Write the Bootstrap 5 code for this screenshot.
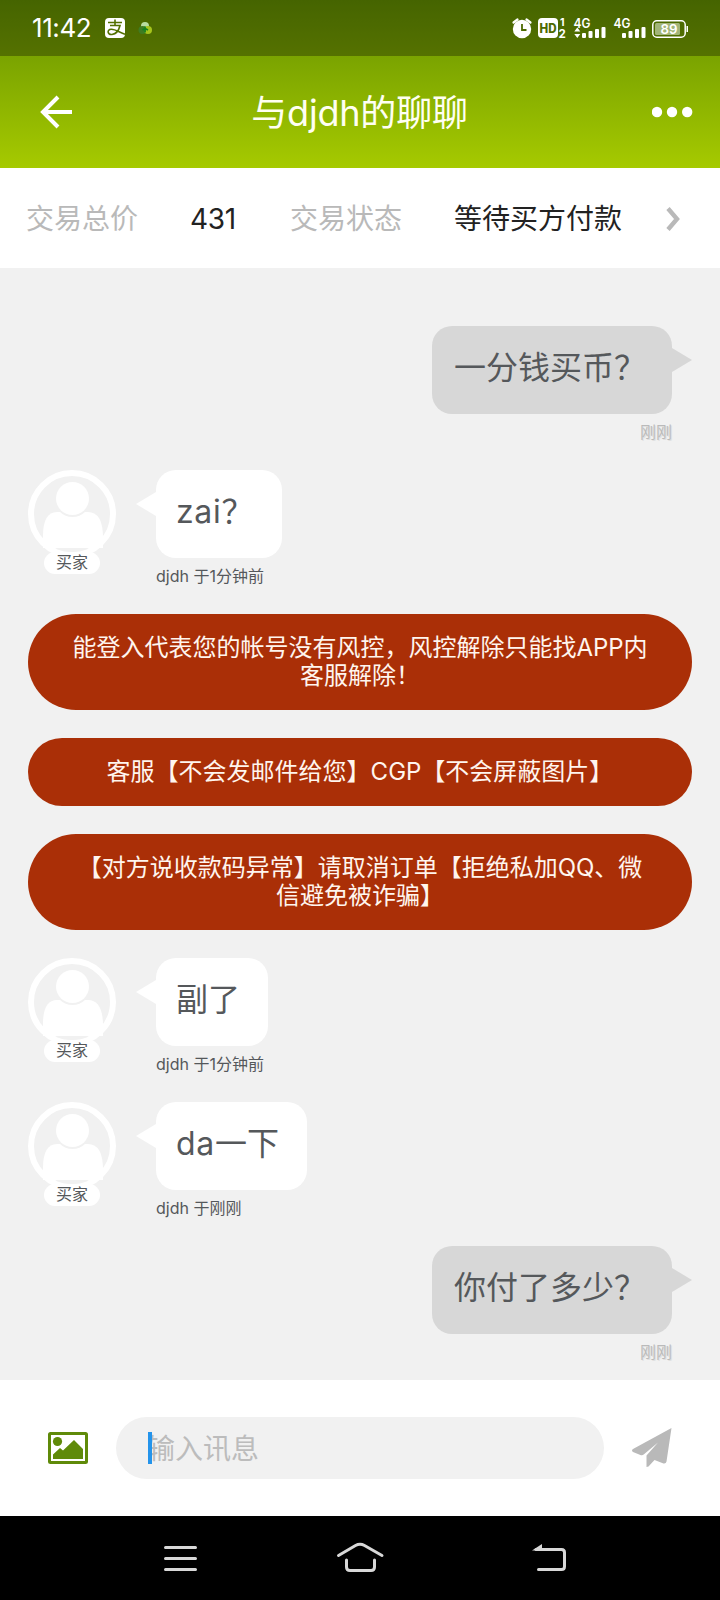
<!DOCTYPE html>
<html lang="zh-CN">
<head>
<meta charset="utf-8">
<meta name="viewport" content="width=device-width, initial-scale=1">
<title>与djdh的聊聊</title>
<link href="https://cdn.jsdelivr.net/npm/bootstrap@5.3.0/dist/css/bootstrap.min.css" rel="stylesheet">
<style>
  body { font-family: Inter, "Noto Sans CJK SC", sans-serif; background: #f1f1f1; color: #55585b; width: 720px; min-height: 1600px; }
  svg { display: block; flex: none; }
  svg text { font-family: Inter, "Noto Sans CJK SC", sans-serif; }
  .app-top { height: 168px; background: linear-gradient(#649000, #a6ca00); }
  .status-strip { height: 56px; background: rgba(0,0,0,.3); padding-left: 32px; }
  .clock { font-size: 26px; line-height: 56px; width: 73px; letter-spacing: -.4px; }
  .title-bar { height: 112px; padding: 0 27px 0 40px; }
  .chat-title { font-size: 36px; font-weight: 380; line-height: 112px; color: #fffff2; letter-spacing: -.2px; padding: 2px 6px 0 0; }
  .deal-row { height: 100px; font-size: 28px; line-height: 100px; padding: 2px 40px 0 26px; color: #222; font-weight: 380; }
  .deal-label { color: #b9b9b9; width: 164px; }
  .deal-sum { width: 100px; letter-spacing: -.3px; }
  .chat-log { height: 1112px; padding: 58px 28px 0; gap: 28px; }
  .msg { height: 116px; }
  .bubble { position: relative; height: 88px; flex: none; border-radius: 20px; background: #fff; padding: 0 28px 0 20px; font-size: 32px; font-weight: 380; line-height: 84px; white-space: nowrap; }
  .bubble::before { content: ""; position: absolute; top: 22px; left: -20px; border: 12px solid transparent; border-width: 12px 20px 12px 0; border-right-color: #fff; }
  .bubble-mine { background: #d7d7d7; margin-right: 20px; padding: 0 26px 0 22px; }
  .bubble-mine::before { left: auto; right: -20px; border-width: 12px 0 12px 20px; border-color: transparent transparent transparent #d7d7d7; }
  .wide-latin { letter-spacing: .7px; }
  .stamp { font-size: 16px; line-height: 24px; margin-top: 6px; white-space: nowrap; font-weight: 380; }
  .stamp-mine { color: #bababa; margin-right: 20px; text-shadow: 1px 1px 0 #e0e0e0; }
  .who { width: 88px; margin-right: 40px; }
  .role { width: 56px; height: 22px; line-height: 21px; font-size: 16px; font-weight: 380; background: #fff; border-radius: 11px; margin-top: -6px; position: relative; }
  .notice { background: #aa2f07; color: #fff5ee; border-radius: 48px; padding: 20px 0; font-size: 24px; line-height: 28px; }
  .composer { height: 136px; padding-left: 48px; padding-right: 47px; }
  .entry { width: 488px; height: 62px; flex: none; border-radius: 31px; background: #f1f1f1; margin: 0 28px; padding-left: 31px; font-size: 28px; font-weight: 380; color: #bcbcbc; line-height: 64px; position: relative; }
  .caret { position: absolute; left: 32px; top: 15px; width: 4px; height: 32px; background: #2494eb; }
  .sys-nav { height: 84px; background: #000; }
</style>
</head>
<body>
<header class="app-top text-white">
  <div class="status-strip d-flex align-items-center">
    <span class="clock">11:42</span>
    <svg width="48" height="56" viewBox="0 0 48 56">
      <rect y="18" width="20" height="20" rx="4" fill="#fff"/>
      <path d="M3 22.500h14M10 19.500v6M5 25.500h10c-1.200 5-4 8.500-8 9-4.500.4-5.500-5-.8-5.200 4-.2 8 3 13.800 5" fill="none" stroke="#527000" stroke-width="1.600"/>
      <circle cx="40" cy="26" r="4" fill="#b8dca0"/><circle cx="37.500" cy="30" r="4" fill="#3f7c22"/><circle cx="43" cy="30" r="4" fill="#a6c41c"/>
      <path d="M40 26.500v6M37.500 30l2.500-1.500 3 1.500" stroke="#168020" stroke-width="1.800" fill="none"/>
    </svg>
    <svg class="ms-auto" width="209" height="56" viewBox="511 0 209 56">
      <g fill="#fff">
        <circle cx="522" cy="29" r="9.200"/>
        <path d="M513.500 22.500l4-3M530.500 22.500l-4-3" stroke="#fff" stroke-width="2.200" stroke-linecap="round"/>
        <path d="M522 24v6h4.500" stroke="#4d6a00" stroke-width="1.800" fill="none"/>
        <rect x="538" y="18" width="20" height="20" rx="4"/>
        <text x="539.500" y="32.800" font-size="12.500" font-weight="800" fill="#4d6a00" textLength="17" lengthAdjust="spacingAndGlyphs">HD</text>
        <text x="560" y="26" font-size="10.500" font-weight="700">1</text>
        <text x="558.500" y="37.500" font-size="11.500" font-weight="700">2</text>
        <text x="573.500" y="27.500" font-size="13" font-weight="600" textLength="17" lengthAdjust="spacingAndGlyphs">4G</text>
        <path d="M577.300 27.500l3 4h-6zM577.300 38l-3-4h6z"/>
        <rect x="582" y="33" width="4" height="5" rx="1"/><rect x="588.500" y="31" width="4" height="7" rx="1"/><rect x="595" y="29" width="4" height="9" rx="1"/><rect x="601.500" y="27" width="4" height="11" rx="1"/>
        <text x="613.500" y="27.500" font-size="13" font-weight="600" textLength="17" lengthAdjust="spacingAndGlyphs">4G</text>
        <rect x="622" y="33" width="4" height="5" rx="1"/><rect x="628.500" y="31" width="4" height="7" rx="1"/><rect x="635" y="29" width="4" height="9" rx="1"/><rect x="641.500" y="27" width="4" height="11" rx="1"/>
        <rect x="652.800" y="20.800" width="32.400" height="16.400" rx="4" fill="none" stroke="#fff" stroke-width="1.500"/>
        <rect x="655" y="23" width="25" height="12" rx="1.500" fill="#a2b578"/>
        <rect x="686.500" y="26" width="1.500" height="6"/>
        <text x="660.500" y="34" font-size="13.500" font-weight="600" textLength="17" lengthAdjust="spacingAndGlyphs">89</text>
      </g>
    </svg>
  </div>
  <nav class="title-bar d-flex align-items-center justify-content-between">
    <svg width="33" height="34" viewBox="0 0 33 34"><path d="M32 17H3M18 2L3 17l15 15" fill="none" stroke="#fff" stroke-width="4"/></svg>
    <span class="chat-title">与djdh的聊聊</span>
    <svg width="41" height="12" viewBox="0 0 41 12" fill="#fff"><circle cx="5" cy="6" r="5.200"/><circle cx="20" cy="6" r="5.200"/><circle cx="35.200" cy="6" r="5.200"/></svg>
  </nav>
</header>

<section class="deal-row d-flex align-items-center bg-white">
  <span class="deal-label">交易总价</span>
  <span class="deal-sum">431</span>
  <span class="deal-label">交易状态</span>
  <span>等待买方付款</span>
  <svg class="ms-auto" width="14" height="24" viewBox="0 0 14 24"><path d="M2 1.500L11 12 2 22.500" fill="none" stroke="#b9b9b9" stroke-width="4.400"/></svg>
</section>

<main class="chat-log d-flex flex-column">
  <article class="msg d-flex flex-column align-items-end">
    <div class="bubble bubble-mine">一分钱买币&#65311;</div>
    <div class="stamp stamp-mine">刚刚</div>
  </article>

  <article class="msg d-flex">
    <div class="who d-flex flex-column align-items-center">
      <svg width="88" height="88" viewBox="0 0 88 88"><use href="#person"/></svg>
      <span class="role text-center">买家</span>
    </div>
    <div class="d-flex flex-column align-items-start">
      <div class="bubble"><span class="wide-latin">zai</span>&#65311;</div>
      <div class="stamp">djdh 于1分钟前</div>
    </div>
  </article>

  <div class="notice text-center">能登入代表您的帐号没有风控&#65292;风控解除只能找APP内<br>客服解除&#65281;</div>
  <div class="notice text-center">客服【不会发邮件给您】CGP【不会屏蔽图片】</div>
  <div class="notice text-center">【对方说收款码异常】请取消订单【拒绝私加QQ、微<br>信避免被诈骗】</div>

  <article class="msg d-flex">
    <div class="who d-flex flex-column align-items-center">
      <svg width="88" height="88" viewBox="0 0 88 88"><use href="#person"/></svg>
      <span class="role text-center">买家</span>
    </div>
    <div class="d-flex flex-column align-items-start">
      <div class="bubble">副了</div>
      <div class="stamp">djdh 于1分钟前</div>
    </div>
  </article>

  <article class="msg d-flex">
    <div class="who d-flex flex-column align-items-center">
      <svg width="88" height="88" viewBox="0 0 88 88"><use href="#person"/></svg>
      <span class="role text-center">买家</span>
    </div>
    <div class="d-flex flex-column align-items-start">
      <div class="bubble"><span class="wide-latin">da</span>一下</div>
      <div class="stamp">djdh 于刚刚</div>
    </div>
  </article>

  <article class="msg d-flex flex-column align-items-end">
    <div class="bubble bubble-mine">你付了多少&#65311;</div>
    <div class="stamp stamp-mine">刚刚</div>
  </article>
</main>

<section class="composer d-flex align-items-center bg-white">
  <svg width="40" height="32" viewBox="0 0 40 32"><rect x="1.500" y="1.500" width="37" height="29" rx="1" fill="none" stroke="#5f8a09" stroke-width="3"/><circle cx="9.500" cy="9.500" r="4.600" fill="#5f8a09"/><path d="M5 27v-4.500L12 16l3 2.500L26 8l9 9v10z" fill="#5f8a09"/></svg>
  <div class="entry">输入讯息<span class="caret"></span></div>
  <svg width="41" height="42" viewBox="0 0 41 42"><path d="M39.500 1L1 22q-2 1.500 0 3l8 3.200q1.500.5 3-1L26 15.500 14.500 28.500V40l2-.5 6-6.500 9 3.500q2.500.5 3-2L39.500 1z" fill="#b9b9b9"/></svg>
</section>

<footer class="sys-nav">
  <svg width="720" height="84" viewBox="0 0 720 84" fill="none" stroke="#d8d8d8" stroke-width="3" stroke-linecap="round" stroke-linejoin="round">
    <path d="M165.500 31.500h30M165.500 42.500h30M165.500 53.500h30"/>
    <path d="M338.500 39.500l17-10q4.500-2.500 9 0l17.500 10M346.500 44v7q0 3.500 3.500 3.500h21q3.500 0 3.500-3.500v-7"/>
    <path d="M536 33.500h25.500q3 0 3 3v14q0 3-3 3H538.500"/>
    <path d="M532 34.500l10-6.500v6.500z" fill="#d8d8d8" stroke="none"/>
  </svg>
</footer>

<svg width="0" height="0" class="position-absolute">
  <defs>
    <g id="person">
      <circle cx="44" cy="44" r="41" fill="none" stroke="#fff" stroke-width="6"/>
      <path d="M15 78V66q0-24 14-24h31q15 0 15 26v10z" fill="#fff"/>
      <circle cx="44.500" cy="29" r="18" fill="#f1f1f1"/>
      <circle cx="44.500" cy="28.500" r="16.500" fill="#fff"/>
      <path d="M27 78.500h34q-8 3.500-17 3.500t-17-3.500z" fill="#f1f1f1"/>
    </g>
  </defs>
</svg>
<script src="https://cdn.jsdelivr.net/npm/bootstrap@5.3.0/dist/js/bootstrap.bundle.min.js"></script>
</body>
</html>
